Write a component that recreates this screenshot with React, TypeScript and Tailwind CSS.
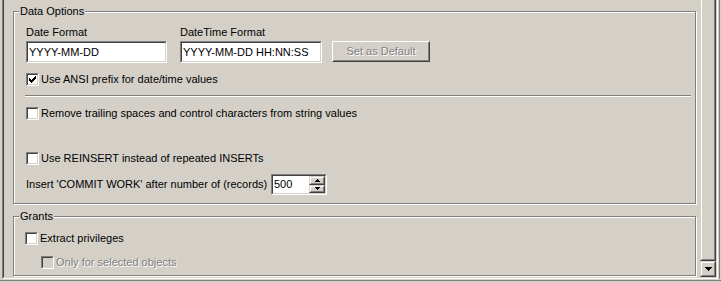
import React from "react";

function CheckMark() {
  return (
    <svg width="7" height="7" viewBox="0 0 7 7" shapeRendering="crispEdges">
      <path
        d="M0 2h1v3H0z M1 3h1v3H1z M2 4h1v3H2z M3 3h1v3H3z M4 2h1v3H4z M5 1h1v3H5z M6 0h1v3H6z"
        fill="#000"
      />
    </svg>
  );
}

function ArrowUp() {
  return (
    <svg width="5" height="3" viewBox="0 0 5 3" shapeRendering="crispEdges">
      <path d="M2 0h1v1H2z M1 1h3v1H1z M0 2h5v1H0z" fill="#000" />
    </svg>
  );
}

function ArrowDown() {
  return (
    <svg width="5" height="3" viewBox="0 0 5 3" shapeRendering="crispEdges">
      <path d="M0 0h5v1H0z M1 1h3v1H1z M2 2h1v1H2z" fill="#000" />
    </svg>
  );
}

function ArrowDownBig() {
  return (
    <svg width="7" height="4" viewBox="0 0 7 4" shapeRendering="crispEdges">
      <path d="M0 0h7v1H0z M1 1h5v1H1z M2 2h3v1H2z M3 3h1v1H3z" fill="#000" />
    </svg>
  );
}

function Checkbox({ checked, disabled }: { checked?: boolean; disabled?: boolean }) {
  return (
    <div className="w-[13px] h-[13px] shrink-0 border border-t-[#808080] border-l-[#808080] border-b-white border-r-white">
      <div
        className={
          disabled
            ? "w-full h-full border border-t-[#404040] border-l-[#404040] border-b-[#d4d0c8] border-r-[#d4d0c8] bg-[#d4d0c8] flex items-center justify-center"
            : "w-full h-full border border-t-[#404040] border-l-[#404040] border-b-[#d4d0c8] border-r-[#d4d0c8] bg-white flex items-center justify-center"
        }
      >
        {checked && <CheckMark />}
      </div>
    </div>
  );
}

function CheckRow({
  label,
  checked,
  disabled,
}: {
  label: string;
  checked?: boolean;
  disabled?: boolean;
}) {
  return (
    <div className="flex items-center h-[13px]">
      <Checkbox checked={checked} disabled={disabled} />
      <span
        className={
          disabled
            ? "ml-[2px] whitespace-nowrap text-[#808080] [text-shadow:1px_1px_0_#fff]"
            : "ml-[2px] whitespace-nowrap"
        }
      >
        {label}
      </span>
    </div>
  );
}

function Edit({ value, className }: { value: string; className: string }) {
  return (
    <div
      className={`border border-t-[#808080] border-l-[#808080] border-b-white border-r-white ${className}`}
    >
      <div className="w-full h-full border border-t-[#404040] border-l-[#404040] border-b-[#d4d0c8] border-r-[#d4d0c8] bg-white flex items-center pl-[1px] whitespace-nowrap">
        {value}
      </div>
    </div>
  );
}

function GroupBox({
  label,
  className,
  children,
}: {
  label: string;
  className: string;
  children: React.ReactNode;
}) {
  return (
    <div
      className={`relative border border-[#808080] shadow-[inset_1px_1px_0_#fff,1px_1px_0_#fff] ${className}`}
    >
      <span className="absolute left-[5px] top-[-7px] bg-[#d4d0c8] px-[1px] leading-[13px] whitespace-nowrap">
        {label}
      </span>
      {children}
    </div>
  );
}

function SpinButton({ up }: { up?: boolean }) {
  return (
    <div className="flex-1 border border-t-[#d4d0c8] border-l-[#d4d0c8] border-b-[#404040] border-r-[#404040]">
      <div className="w-full h-full bg-[#d4d0c8] border border-t-white border-l-white border-b-[#808080] border-r-[#808080] flex items-center justify-center">
        {up ? <ArrowUp /> : <ArrowDown />}
      </div>
    </div>
  );
}

export default function App() {
  return (
    <div className="w-[721px] h-[283px] bg-[#d4d0c8] overflow-hidden text-[11px] leading-[13px] text-black font-['Liberation_Sans',Arial,sans-serif] flex flex-col">
      <div className="flex h-[279px] shrink-0">
        <div className="w-[2px] shrink-0" />
        <div className="w-[716px] shrink-0 border-l border-r border-b border-l-[#808080] border-r-white border-b-white">
          <div className="h-full flex border-l border-r border-b border-l-[#404040] border-r-[#d4d0c8] border-b-[#d4d0c8]">
            {/* content */}
            <div className="w-[696px] shrink-0 pt-[11px] pl-[9px]">
              <GroupBox label="Data Options" className="w-[683px] h-[193px]">
                <div className="pl-[12px] pt-[14px]">
                  <div className="flex">
                    <div className="w-[154px] shrink-0">
                      <div className="whitespace-nowrap">Date Format</div>
                      <Edit value="YYYY-MM-DD" className="mt-[2px] w-[141px] h-[22px]" />
                    </div>
                    <div className="w-[152px] shrink-0">
                      <div className="whitespace-nowrap">DateTime Format</div>
                      <Edit value="YYYY-MM-DD HH:NN:SS" className="mt-[2px] w-[142px] h-[22px]" />
                    </div>
                    <div className="mt-[15px] w-[98px] h-[21px] border border-t-white border-l-white border-b-[#404040] border-r-[#404040]">
                      <div className="w-full h-full border border-t-[#d4d0c8] border-l-[#d4d0c8] border-b-[#808080] border-r-[#808080] flex items-center justify-center text-[#808080] [text-shadow:1px_1px_0_#fff] whitespace-nowrap">
                        Set as Default
                      </div>
                    </div>
                  </div>
                  <div className="mt-[10px]">
                    <CheckRow label="Use ANSI prefix for date/time values" checked />
                  </div>
                  <div className="mt-[9px] -ml-[1px] w-[666px] h-[2px] border-t border-t-[#808080] border-b border-b-white" />
                  <div className="mt-[10px]">
                    <CheckRow label="Remove trailing spaces and control characters from string values" />
                  </div>
                  <div className="mt-[32px]">
                    <CheckRow label="Use REINSERT instead of repeated INSERTs" />
                  </div>
                  <div className="mt-[9px] flex items-center h-[21px]">
                    <div className="w-[245px] shrink-0 whitespace-nowrap">
                      Insert 'COMMIT WORK' after number of (records)
                    </div>
                    <div className="w-[56px] h-[21px] border border-t-[#808080] border-l-[#808080] border-b-white border-r-white">
                      <div className="w-full h-full border border-t-[#404040] border-l-[#404040] border-b-[#d4d0c8] border-r-[#d4d0c8] bg-white flex">
                        <div className="flex-1 flex items-center pl-[1px]">500</div>
                        <div className="w-[16px] flex flex-col">
                          <SpinButton up />
                          <SpinButton />
                        </div>
                      </div>
                    </div>
                  </div>
                </div>
              </GroupBox>
              <GroupBox label="Grants" className="mt-[12px] w-[683px] h-[60px]">
                <div className="pl-[11px] pt-[15px]">
                  <CheckRow label="Extract privileges" />
                  <div className="mt-[11px] ml-[16px]">
                    <CheckRow label="Only for selected objects" disabled />
                  </div>
                </div>
              </GroupBox>
            </div>
            {/* scrollbar */}
            <div className="w-[16px] shrink-0 flex flex-col">
              <div className="flex-1 border-l border-r border-b border-l-[#d4d0c8] border-r-[#404040] border-b-[#404040]">
                <div className="w-full h-full border-l border-r border-b border-l-white border-r-[#808080] border-b-[#808080]" />
              </div>
              <div className="h-[16px] shrink-0 border border-t-[#d4d0c8] border-l-[#d4d0c8] border-b-[#404040] border-r-[#404040]">
                <div className="w-full h-full border border-t-white border-l-white border-b-[#808080] border-r-[#808080] flex items-center justify-center">
                  <ArrowDownBig />
                </div>
              </div>
            </div>
          </div>
        </div>
        <div className="flex-1 flex">
          <div className="w-[1px]" />
          <div className="w-[1px] bg-[#808080]" />
          <div className="w-[1px]" />
        </div>
      </div>
      <div className="flex-1 flex flex-col">
        <div className="h-[1px]" />
        <div className="h-[1px] bg-[#808080]" />
      </div>
    </div>
  );
}
